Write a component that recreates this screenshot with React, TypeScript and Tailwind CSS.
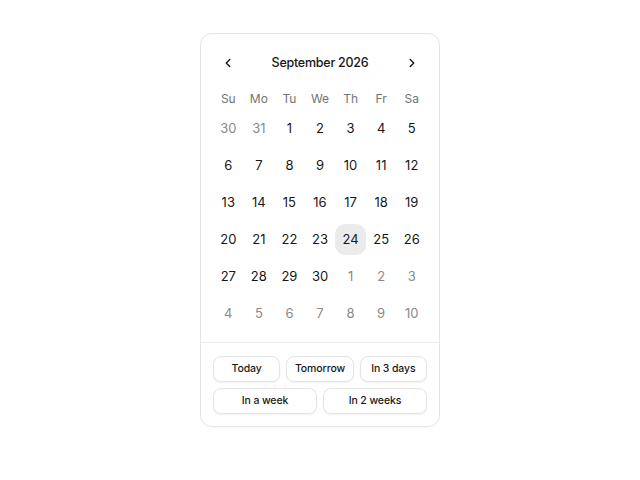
import React, { useState } from 'react';
import { ChevronLeft, ChevronRight } from 'lucide-react';

const weekdays = ['Su', 'Mo', 'Tu', 'We', 'Th', 'Fr', 'Sa'];

// 6 weeks shown for September 2026 (starts on a Tuesday)
const buildDays = () => {
  const days: { n: number; current: boolean }[] = [];
  days.push({ n: 30, current: false }, { n: 31, current: false });
  for (let i = 1; i <= 30; i++) days.push({ n: i, current: true });
  let next = 1;
  while (days.length < 42) days.push({ n: next++, current: false });
  return days;
};

const presets = ['Today', 'Tomorrow', 'In 3 days'];
const presets2 = ['In a week', 'In 2 weeks'];

const Preset = ({ label }: { label: string }) => (
  <button className="h-[26px] rounded-lg border border-[#e5e5e5] bg-white shadow-[0_1px_2px_rgba(0,0,0,0.06)] text-[10.5px] font-[550] tracking-[-0.01em] text-[#171717]">
    {label}
  </button>
);

export default function App() {
  const [selected, setSelected] = useState(24);
  const days = buildDays();

  return (
    <div className="min-h-screen bg-white flex justify-center pt-[33px] font-['Inter',sans-serif] text-[#171717]">
      <div className="w-60 h-fit rounded-xl border border-[#e5e5e5] bg-white shadow-[0_1px_2px_rgba(0,0,0,0.03)]">
        <div className="px-3 pt-[13px] pb-[13px]">
          <div className="flex items-center justify-between h-8">
            <button className="w-[30px] h-8 flex items-center justify-center text-[#171717]">
              <ChevronLeft size={14} strokeWidth={2.4} />
            </button>
            <div className="text-[12.5px] font-[550] tracking-[-0.02em]">September 2026</div>
            <button className="w-[30px] h-8 flex items-center justify-center text-[#171717]">
              <ChevronRight size={14} strokeWidth={2.4} />
            </button>
          </div>

          <div className="grid grid-cols-7 mt-2 h-6 items-center">
            {weekdays.map(d => (
              <div key={d} className="text-center text-[12px] text-[#737373]">{d}</div>
            ))}
          </div>

          <div className="grid grid-cols-7 gap-y-[6px] mt-[2px]">
            {days.map((d, i) => (
              <button
                key={i}
                onClick={() => d.current && setSelected(d.n)}
                className={`h-[31px] rounded-[10px] flex items-center justify-center text-[13px] ${
                  d.current ? 'text-[#171717]' : 'text-[#8a8a8a]'
                } ${d.current && d.n === selected ? 'bg-[#ebebeb]' : ''}`}
              >
                {d.n}
              </button>
            ))}
          </div>
        </div>

        <div className="border-t border-[#ebebeb] px-3 pt-[13px] pb-3 flex flex-col gap-[6px]">
          <div className="grid grid-cols-3 gap-[6px]">
            {presets.map(p => (
              <Preset key={p} label={p} />
            ))}
          </div>
          <div className="grid grid-cols-2 gap-[6px]">
            {presets2.map(p => (
              <Preset key={p} label={p} />
            ))}
          </div>
        </div>
      </div>
    </div>
  );
}
